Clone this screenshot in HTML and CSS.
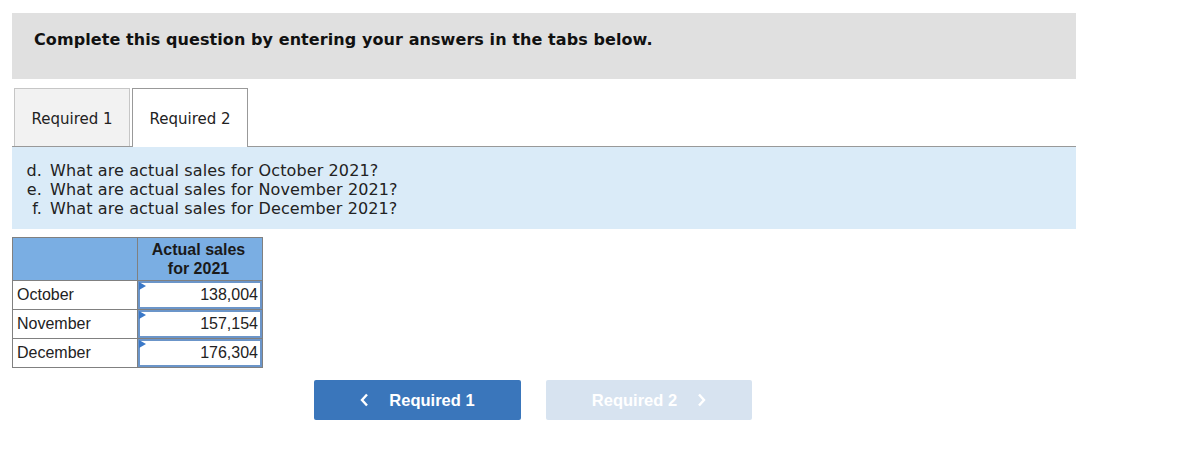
FILE: index.html
```html
<!DOCTYPE html>
<html lang="en">
<head>
<meta charset="utf-8">
<title>Required 2</title>
<link rel="stylesheet" href="styles.css">
</head>
<body>
<div class="page">
  <div class="banner">Complete this question by entering your answers in the tabs below.</div>
  <div class="tabs">
    <div class="tab tab-inactive">Required 1</div>
    <div class="tab tab-active">Required 2</div>
  </div>
  <div class="question">
    <div class="qline"><span class="marker">d.</span>What are actual sales for October 2021?</div>
    <div class="qline"><span class="marker">e.</span>What are actual sales for November 2021?</div>
    <div class="qline"><span class="marker">f.</span>What are actual sales for December 2021?</div>
  </div>
  <table class="grid">
    <thead>
      <tr><th class="blank"></th><th class="colhead">Actual sales<br>for 2021</th></tr>
    </thead>
    <tbody>
      <tr><td class="label">October</td><td class="entry"><div class="box">138,004</div></td></tr>
      <tr><td class="label">November</td><td class="entry"><div class="box">157,154</div></td></tr>
      <tr><td class="label">December</td><td class="entry"><div class="box">176,304</div></td></tr>
    </tbody>
  </table>
  <div class="nav">
    <div class="btn btn-prev"><svg class="chev" width="9" height="14" viewBox="0 0 9 14"><path d="M7 1.5 L2 7 L7 12.5" fill="none" stroke="#fff" stroke-width="2.4"/></svg><span>Required 1</span></div>
    <div class="btn btn-next"><span>Required 2</span><svg class="chev" width="9" height="14" viewBox="0 0 9 14"><path d="M2 1.5 L7 7 L2 12.5" fill="none" stroke="#fff" stroke-width="2.4"/></svg></div>
  </div>
</div>
</body>
</html>
```
FILE: styles.css
```css
html, body { margin: 0; padding: 0; background: #fff; }
.page {
  width: 1064px;
  padding: 13px 0 0 12px;
  font-family: "DejaVu Sans", Verdana, sans-serif;
  color: #111;
}
.banner {
  height: 66px;
  background: #e0e0e0;
  box-sizing: border-box;
  padding: 17px 0 0 22px;
  font-weight: bold;
  font-size: 16px;
  letter-spacing: 0.08px;
  line-height: 19px;
  color: #111;
}
.tabs {
  margin-top: 9px;
  display: flex;
  gap: 2px;
  padding-left: 2px;
  border-bottom: 1px solid #999;
  height: 58px;
}
.tab {
  width: 116px;
  box-sizing: border-box;
  display: flex;
  align-items: center;
  justify-content: center;
  padding-top: 2px;
  font-size: 15px;
  color: #222;
}
.tab-inactive {
  height: 58px;
  background: #f2f2f2;
  border: 1px solid #c6c6c6;
  border-bottom: none;
}
.tab-active {
  height: 59px;
  background: #fff;
  border: 1px solid #999;
  border-bottom: none;
  position: relative;
  z-index: 1;
}
.question {
  background: #daebf8;
  padding: 14px 0 11px 0;
  font-size: 16px;
  line-height: 19px;
  letter-spacing: 0.12px;
  color: #222;
}
.qline { display: flex; }
.marker {
  width: 38px;
  text-align: right;
  padding-right: 8px;
  box-sizing: border-box;
}
.grid {
  margin-top: 8px;
  border-collapse: collapse;
  font-family: "Liberation Sans", Arial, sans-serif;
  font-size: 16px;
  color: #222;
}
.grid th, .grid td {
  border: 1px solid #808080;
  padding: 0;
}
.grid th {
  background: #7aaee3;
  height: 43px;
  font-weight: bold;
  line-height: 19px;
  text-align: center;
  color: #1a1a1a;
  box-sizing: border-box;
}
.blank { width: 124px; }
.colhead { width: 125px; padding-right: 3px !important; }
.label {
  height: 28px;
  padding-left: 4px !important;
  width: 120px;
}
.entry { position: relative; }
.box {
  position: relative;
  height: 28px;
  box-sizing: border-box;
  border: 2px solid #6b95c9;
  text-align: right;
  padding-right: 2px;
  line-height: 24px;
  background: #fff;
}
.box::before {
  content: "";
  position: absolute;
  left: -1px;
  top: -1px;
  border-left: 7px solid #3a78c8;
  border-top: 4px solid transparent;
  border-bottom: 4px solid transparent;
}
.nav {
  margin-top: 12px;
  padding-left: 302px;
  display: flex;
  gap: 25px;
}
.btn {
  width: 207px;
  height: 40px;
  border-radius: 2px;
  display: flex;
  align-items: center;
  justify-content: center;
  gap: 20px;
  font-family: "Liberation Sans", Arial, sans-serif;
  font-weight: bold;
  font-size: 16.5px;
  color: #fff;
}
.btn-prev { background: #3a76bb; }
.btn-next { background: #d7e3f0; width: 206px; }
.chev { display: block; }
```
